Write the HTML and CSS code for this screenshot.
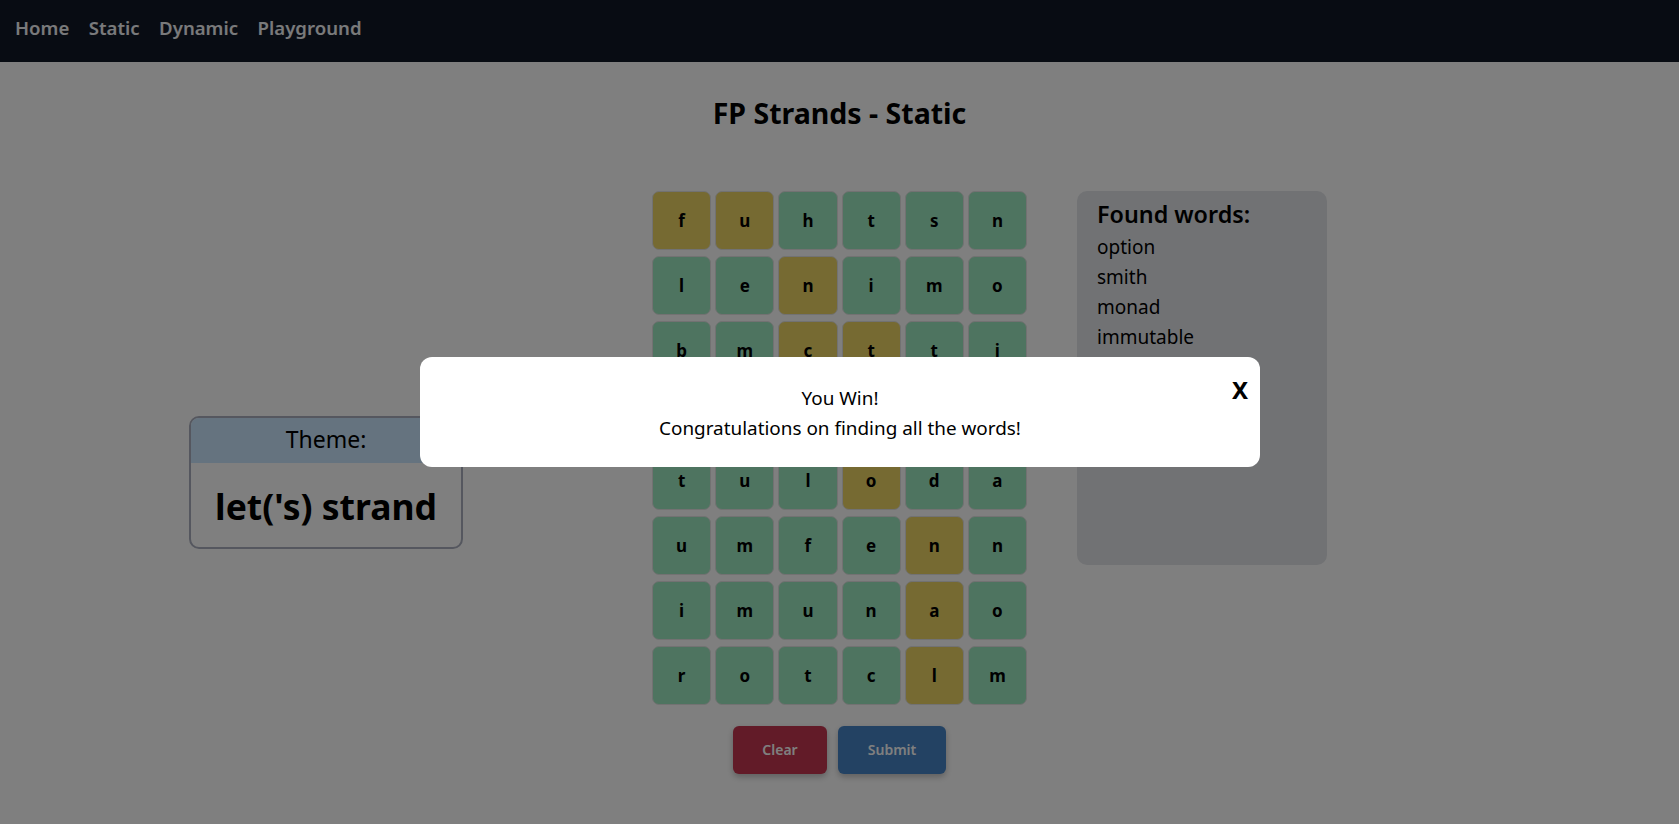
FILE: index.html
```html
<!DOCTYPE html>
<html lang="en">
<head>
<meta charset="utf-8">
<title>FP Strands - Static</title>
<link rel="stylesheet" href="styles.css">
</head>
<body>
<nav class="topnav">
  <a class="navlink" href="#">Home</a>
  <a class="navlink" href="#">Static</a>
  <a class="navlink" href="#">Dynamic</a>
  <a class="navlink" href="#">Playground</a>
</nav>
<main class="page">
  <h1 class="title">FP Strands - Static</h1>
  <div class="game">
    <div class="theme-col">
      <div class="theme">
        <div class="theme-head">Theme:</div>
        <div class="theme-body">let('s) strand</div>
      </div>
    </div>
    <div class="board-col">
      <div class="board">
        <div class="tile y">f</div><div class="tile y">u</div><div class="tile g">h</div><div class="tile g">t</div><div class="tile g">s</div><div class="tile g">n</div>
        <div class="tile g">l</div><div class="tile g">e</div><div class="tile y">n</div><div class="tile g">i</div><div class="tile g">m</div><div class="tile g">o</div>
        <div class="tile g">b</div><div class="tile g">m</div><div class="tile y">c</div><div class="tile y">t</div><div class="tile g">t</div><div class="tile g">i</div>
        <div class="tile g"></div><div class="tile g"></div><div class="tile y"></div><div class="tile y"></div><div class="tile g"></div><div class="tile g"></div>
        <div class="tile g">t</div><div class="tile g">u</div><div class="tile g">l</div><div class="tile y">o</div><div class="tile g">d</div><div class="tile g">a</div>
        <div class="tile g">u</div><div class="tile g">m</div><div class="tile g">f</div><div class="tile g">e</div><div class="tile y">n</div><div class="tile g">n</div>
        <div class="tile g">i</div><div class="tile g">m</div><div class="tile g">u</div><div class="tile g">n</div><div class="tile y">a</div><div class="tile g">o</div>
        <div class="tile g">r</div><div class="tile g">o</div><div class="tile g">t</div><div class="tile g">c</div><div class="tile y">l</div><div class="tile g">m</div>
      </div>
      <div class="actions">
        <button class="btn btn-clear">Clear</button>
        <button class="btn btn-submit">Submit</button>
      </div>
    </div>
    <div class="found-col">
      <div class="found">
        <h2 class="found-title">Found words:</h2>
        <ul class="found-list">
          <li>option</li>
          <li>smith</li>
          <li>monad</li>
          <li>immutable</li>
        </ul>
      </div>
    </div>
  </div>
</main>
<div class="backdrop"></div>
<div class="modal">
  <button class="modal-close">X</button>
  <p class="modal-line">You Win!</p>
  <p class="modal-line">Congratulations on finding all the words!</p>
</div>
</body>
</html>
```
FILE: styles.css
```css
* { box-sizing: border-box; }
html, body { margin: 0; padding: 0; }
body {
  font-family: "Noto Sans", "Open Sans", sans-serif;
  background: #ffffff;
  color: #000;
  width: 1679px;
  height: 824px;
  overflow: hidden;
}
.topnav {
  height: 62px;
  background: #111827;
  display: flex;
  align-items: center;
  gap: 19.5px;
  padding: 0 0 8px 15px;
}
.navlink {
  color: #f3f4f6;
  text-decoration: none;
  font-size: 18.6px;
  font-weight: 600;
}
.page { display: flex; flex-direction: column; }
.title {
  margin: 33px 0 0;
  text-align: center;
  font-size: 28.5px;
  line-height: 36px;
  font-weight: 700;
}
.game {
  margin-top: 60px;
  display: grid;
  grid-template-columns: 1fr 375px 1fr;
  column-gap: 50px;
}
.theme-col { display: flex; align-items: center; justify-content: flex-end; padding-right: 139px; }
.theme {
  width: 274px;
  height: 133px;
  border: 2px solid #abafbe;
  border-radius: 10px;
  overflow: hidden;
  text-align: center;
}
.theme-head {
  height: 45px;
  background: #cae6fe;
  font-size: 23px;
  line-height: 42px;
}
.theme-body {
  font-size: 35.5px;
  font-weight: 700;
  line-height: 86px;
}
.board-col { display: flex; flex-direction: column; align-items: center; }
.board {
  width: 375px;
  display: grid;
  grid-template-columns: repeat(6, 1fr);
  grid-auto-rows: 58.5px;
  column-gap: 4px;
  row-gap: 6.5px;
}
.tile {
  border: 1px solid #e4e4e4;
  border-radius: 7px;
  display: flex;
  align-items: center;
  justify-content: center;
  font-size: 17px;
  font-weight: 700;
}
.tile.g { background: #9de8c0; }
.tile.y { background: #ecd464; }
.actions { margin-top: 21px; display: flex; gap: 11px; }
.btn {
  height: 48px;
  border: none;
  border-radius: 6px;
  color: #fff;
  font-family: inherit;
  font-size: 14px;
  font-weight: 600;
  box-shadow: 0 3px 6px rgba(0,0,0,0.25);
}
.btn-clear { width: 94px; background: #c43650; }
.btn-submit { width: 108px; background: #4684c6; }
.found-col { display: flex; align-items: flex-start; }
.found {
  width: 250px;
  height: 374px;
  background: #e3e5e9;
  border-radius: 10px;
  padding: 7px 20px;
}
.found-title {
  margin: 0;
  font-size: 23.3px;
  font-weight: 600;
  line-height: 32px;
}
.found-list { list-style: none; margin: 2px 0 0; padding: 0; }
.found-list li { font-size: 19px; line-height: 30px; }
.backdrop {
  position: fixed;
  inset: 0;
  background: rgba(0,0,0,0.5);
}
.modal {
  position: fixed;
  left: 420px;
  top: 357px;
  width: 840px;
  height: 110px;
  background: #fff;
  border-radius: 12px;
  padding: 26px 24px 24px;
  text-align: center;
}
.modal-line { margin: 0; font-size: 18.9px; line-height: 30px; }
.modal-close {
  position: absolute;
  top: 16px;
  right: 12px;
  background: none;
  border: none;
  padding: 0;
  font-family: inherit;
  font-size: 24px;
  font-weight: 700;
  cursor: pointer;
}
```
